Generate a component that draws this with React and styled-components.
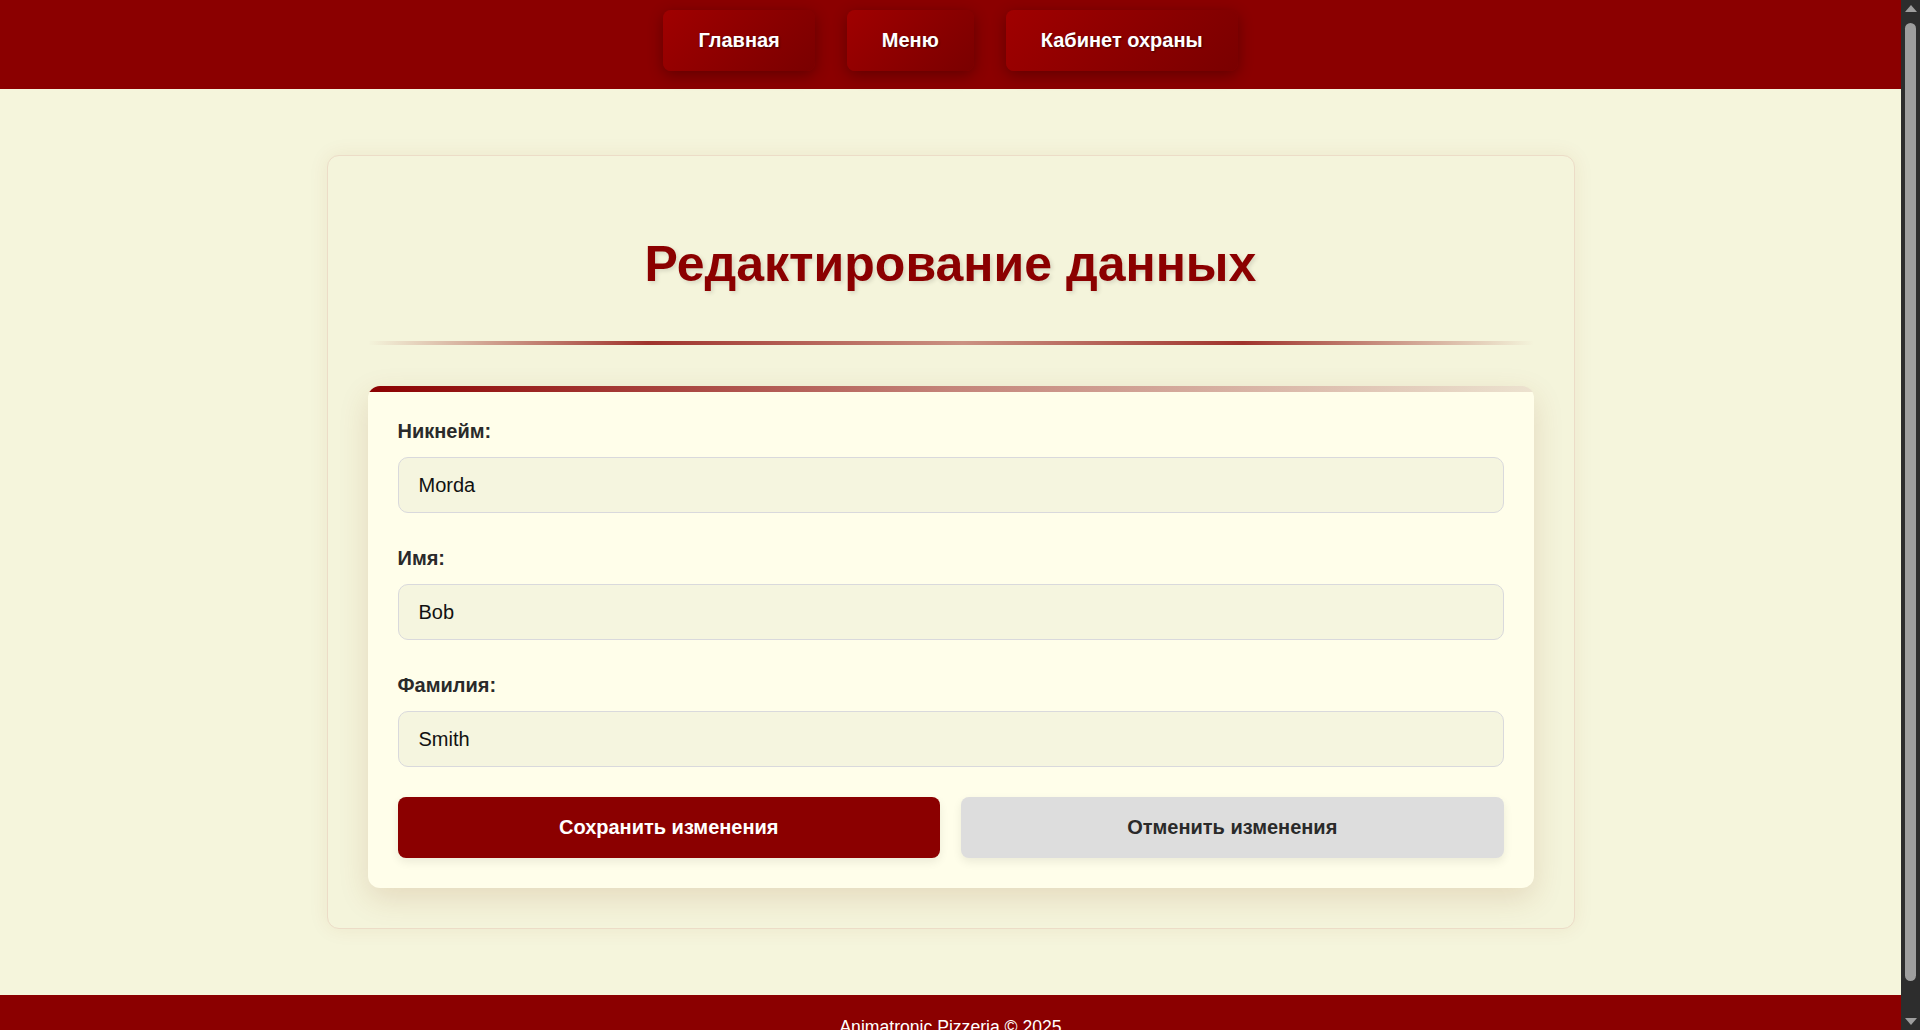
import React from "react";
import styled, { createGlobalStyle } from "styled-components";

const GlobalStyle = createGlobalStyle`
  html, body {
    margin: 0;
    padding: 0;
  }
  body {
    margin-right: 19px;
    background: #F5F5DC;
    font-family: "Liberation Sans", Arial, "Noto Sans", sans-serif;
    color: #333;
  }
  * { box-sizing: border-box; }
`;

const Header = styled.header`
  background: #8B0000;
  padding: 10px 0 18px;
`;

const Nav = styled.nav`
  display: flex;
  justify-content: center;
  gap: 32px;
`;

const NavLink = styled.a`
  display: block;
  padding: 19px 35px;
  font-size: 20px;
  line-height: 23px;
  font-weight: 700;
  color: #fff;
  text-decoration: none;
  border-radius: 8px;
  background: linear-gradient(135deg, #a00000 0%, #7a0000 100%);
  box-shadow: 0 4px 15px rgba(0, 0, 0, 0.3);
  text-shadow: 1px 1px 2px rgba(0, 0, 0, 0.5);
`;

const Main = styled.main`
  display: flex;
  justify-content: center;
  padding: 66px 0;
`;

const Card = styled.section`
  width: 1248px;
  padding: 40px;
  background: #F4F4DB;
  border: 1px solid #ecdcc7;
  border-radius: 12px;
  box-shadow: 0 0 20px rgba(139, 69, 19, 0.08);
`;

const Title = styled.h1`
  margin: 40px 0 48px;
  text-align: center;
  font-size: 50px;
  line-height: 57px;
  font-weight: 700;
  color: #8B0000;
  text-shadow: 2px 2px 4px rgba(0, 0, 0, 0.12);
`;

const Divider = styled.div`
  height: 4px;
  margin-bottom: 41px;
  background: linear-gradient(
    90deg,
    rgba(139, 0, 0, 0) 0%,
    rgba(150, 30, 25, 0.9) 24%,
    rgba(200, 140, 125, 0.95) 51%,
    rgba(150, 30, 25, 0.9) 75%,
    rgba(139, 0, 0, 0) 100%
  );
`;

const FormCard = styled.form`
  padding: 30px;
  border-radius: 12px;
  background:
    linear-gradient(90deg, #8B0000 0%, #c4847a 50%, #ece2cf 100%) top left / 100% 6px no-repeat,
    #FFFEEA;
  box-shadow: 0 10px 30px rgba(139, 69, 19, 0.15);
`;

const Field = styled.div`
  display: flex;
  flex-direction: column;
  margin-bottom: 30px;
`;

const Label = styled.label`
  display: block;
  margin: 4px 0 14px;
  font-size: 20px;
  line-height: 23px;
  font-weight: 700;
  color: #2a2a2a;
`;

const Input = styled.input`
  display: block;
  width: 100%;
  height: 56px;
  padding: 0 20px;
  font-family: inherit;
  font-size: 20px;
  color: #111;
  background: #F5F5DF;
  border: 1px solid #d9d9dc;
  border-radius: 10px;
  outline: none;
`;

const Actions = styled.div`
  display: grid;
  grid-template-columns: 1fr 1fr;
  gap: 21px;
`;

const Button = styled.button`
  padding: 19px;
  font-family: inherit;
  font-size: 20px;
  line-height: 23px;
  font-weight: 700;
  border: none;
  border-radius: 8px;
  cursor: pointer;
  color: ${(p) => (p.$primary ? "#fff" : "#2a2a2a")};
  background: ${(p) => (p.$primary ? "#8B0000" : "#dddddd")};
  box-shadow: 0 4px 10px rgba(0, 0, 0, 0.08);
`;

const Footer = styled.footer`
  background: #8B0000;
  color: #fff;
  text-align: center;
  padding: 22px 0;
  font-size: 17.6px;
  line-height: 20px;
`;

/* Window scrollbar as seen in the screenshot, drawn over the right edge */
const ScrollTrack = styled.div`
  position: fixed;
  top: 0;
  right: 0;
  width: 19px;
  height: 100vh;
  padding: 5px 0;
  background: #2d2d2d;
  display: flex;
  flex-direction: column;
  align-items: center;
`;

const Arrow = styled.span`
  width: 0;
  height: 0;
  border-left: 6px solid transparent;
  border-right: 6px solid transparent;
  ${(p) =>
    p.$down
      ? "border-top: 7px solid #9e9e9e;"
      : "border-bottom: 7px solid #9e9e9e;"}
`;

const Thumb = styled.span`
  flex: 1;
  width: 11px;
  margin: 11px 0 37px;
  border-radius: 6px;
  background: #9e9e9e;
`;

const fields = [
  { id: "nickname", label: "Никнейм:", value: "Morda" },
  { id: "firstname", label: "Имя:", value: "Bob" },
  { id: "lastname", label: "Фамилия:", value: "Smith" },
];

export default function App() {
  return (
    <>
      <GlobalStyle />
      <Header>
        <Nav>
          <NavLink href="#">Главная</NavLink>
          <NavLink href="#">Меню</NavLink>
          <NavLink href="#">Кабинет охраны</NavLink>
        </Nav>
      </Header>
      <Main>
        <Card>
          <Title>Редактирование данных</Title>
          <Divider />
          <FormCard onSubmit={(e) => e.preventDefault()}>
            {fields.map((f) => (
              <Field key={f.id}>
                <Label htmlFor={f.id}>{f.label}</Label>
                <Input id={f.id} defaultValue={f.value} />
              </Field>
            ))}
            <Actions>
              <Button type="submit" $primary>
                Сохранить изменения
              </Button>
              <Button type="button">Отменить изменения</Button>
            </Actions>
          </FormCard>
        </Card>
      </Main>
      <Footer>Animatronic Pizzeria © 2025</Footer>
      <ScrollTrack aria-hidden="true">
        <Arrow />
        <Thumb />
        <Arrow $down />
      </ScrollTrack>
    </>
  );
}
